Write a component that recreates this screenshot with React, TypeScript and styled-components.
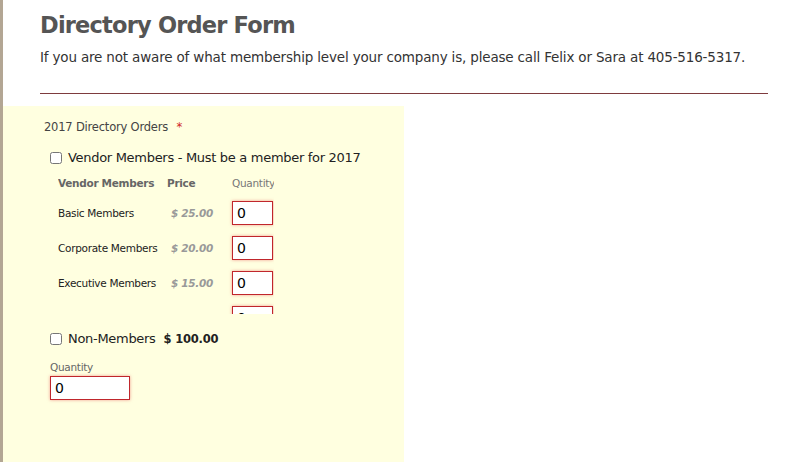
import styled, { createGlobalStyle } from 'styled-components';

const GlobalStyle = createGlobalStyle`
	html, body {
		margin: 0;
		padding: 0;
		background: #fff;
	}
	body {
		font-family: 'DejaVu Sans', Verdana, sans-serif;
		color: #333;
	}
`;

const members = [
	{ name: 'Basic Members', price: '$ 25.00' },
	{ name: 'Corporate Members', price: '$ 20.00' },
	{ name: 'Executive Members', price: '$ 15.00' },
	{ name: 'Select Members', price: '$ 10.00' },
];

const App = (): JSX.Element => {
	return (
		<>
			<GlobalStyle />
			<Page>
				<Header>
					<Title>Directory Order Form</Title>
					<Intro>
						If you are not aware of what membership level your company is, please call Felix or Sara at
						405-516-5317.
					</Intro>
					<Rule />
				</Header>
				<Panel>
					<FieldLabel>
						2017 Directory Orders <Required>*</Required>
					</FieldLabel>
					<CheckRow $top={15}>
						<Check type="checkbox" />
						<CheckText>Vendor Members - Must be a member for 2017</CheckText>
					</CheckRow>
					<TableScroll>
						<Grid>
							<HeadCell>Vendor Members</HeadCell>
							<HeadCell>Price</HeadCell>
							<QtyHead>Quantity</QtyHead>
							{members.map((m) => (
								<Row key={m.name}>
									<NameCell>{m.name}</NameCell>
									<PriceCell>{m.price}</PriceCell>
									<QtyInput defaultValue="0" />
								</Row>
							))}
						</Grid>
					</TableScroll>
					<CheckRow $top={16}>
						<Check type="checkbox" />
						<CheckText>Non-Members</CheckText>
						<FlatPrice>$ 100.00</FlatPrice>
					</CheckRow>
					<SmallLabel>Quantity</SmallLabel>
					<WideInput defaultValue="0" />
				</Panel>
			</Page>
		</>
	);
};

const Page = styled.div`
	min-height: 462px;
	border-left: 3px solid #b3a694;
	display: flex;
	flex-direction: column;
	box-sizing: border-box;
`;

const Header = styled.div`
	padding: 11px 0 0 37px;
	width: 728px;
`;

const Title = styled.h1`
	margin: 0;
	font-family: 'DejaVu Sans', Verdana, sans-serif;
	font-size: 22.5px;
	letter-spacing: -0.8px;
	font-weight: bold;
	color: #555;
	line-height: 28px;
`;

const Intro = styled.p`
	margin: 9px 0 0;
	font-size: 13.5px;
	letter-spacing: -0.17px;
	line-height: 18px;
	color: #333;
`;

const Rule = styled.div`
	height: 1px;
	background: #7e3b3e;
	margin-top: 27px;
`;

const Panel = styled.div`
	margin-top: 12px;
	width: 401px;
	flex: 1;
	background: #ffffe0;
	padding: 14px 0 0 41px;
	box-sizing: border-box;
	display: flex;
	flex-direction: column;
	align-items: flex-start;
`;

const FieldLabel = styled.div`
	font-size: 11.5px;
	letter-spacing: -0.2px;
	color: #444;
	line-height: 14px;
`;

const Required = styled.span`
	color: #d01f1f;
	margin-left: 5px;
`;

const CheckRow = styled.div<{ $top: number }>`
	display: flex;
	align-items: center;
	margin: ${({ $top }) => $top}px 0 0 6px;
	line-height: 18px;
`;

const Check = styled.input`
	width: 12px;
	height: 12px;
	margin: 0 6px 0 0;
`;

const CheckText = styled.span`
	font-size: 13px;
	letter-spacing: -0.3px;
	color: #222;
`;

const FlatPrice = styled.span`
	font-size: 11.5px;
	font-weight: bold;
	color: #222;
	margin-left: 8px;
	letter-spacing: -0.2px;
`;

const TableScroll = styled.div`
	margin: 4px 0 0 14px;
	height: 143px;
	overflow: hidden;
`;

const Grid = styled.div`
	display: grid;
	grid-template-columns: 109px 65px 42px;
	grid-template-rows: 24px;
	grid-auto-rows: 35px;
	align-items: center;
`;

const HeadCell = styled.div`
	font-size: 10.5px;
	font-weight: bold;
	color: #666;
	letter-spacing: -0.3px;
`;

const QtyHead = styled.div`
	font-size: 10.5px;
	color: #777;
	letter-spacing: -0.3px;
`;

const Row = styled.div`
	display: contents;
`;

const NameCell = styled.div`
	font-size: 10.5px;
	color: #222;
	letter-spacing: -0.3px;
`;

const PriceCell = styled.div`
	font-size: 10.5px;
	font-weight: bold;
	font-style: italic;
	color: #999;
	padding-left: 4px;
	letter-spacing: -0.3px;
`;

const QtyInput = styled.input`
	width: 41px;
	height: 24px;
	box-sizing: border-box;
	border: 1px solid #c0262c;
	box-shadow: 0 0 3px rgba(230, 80, 80, 0.55);
	padding: 2px 4px;
	font-family: 'DejaVu Sans', Verdana, sans-serif;
	font-size: 14px;
	color: #000;
	background: #fff;
	outline: none;
`;

const SmallLabel = styled.div`
	margin: 12px 0 0 6px;
	font-size: 10.5px;
	color: #666;
	letter-spacing: -0.3px;
	line-height: 14px;
`;

const WideInput = styled(QtyInput)`
	width: 80px;
	margin: 2px 0 0 6px;
`;

export default App;
